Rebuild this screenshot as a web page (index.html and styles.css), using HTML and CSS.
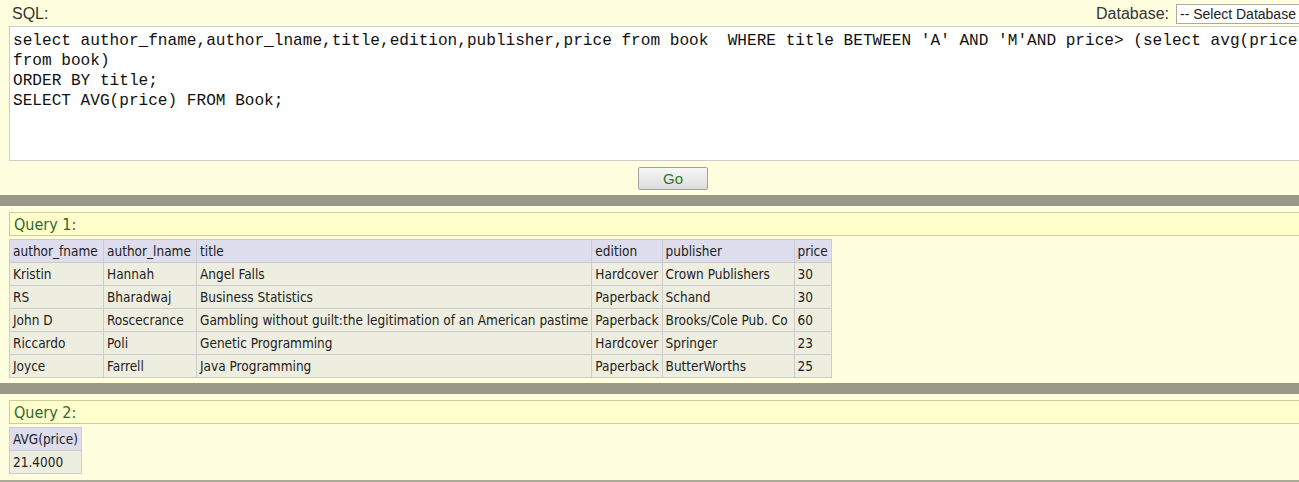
FILE: index.html
```html
<!DOCTYPE html>
<html>
<head>
<meta charset="utf-8">
<link rel="stylesheet" href="styles.css">
</head>
<body>
<div class="page">
  <div class="top">
    <span class="label">SQL:</span>
    <span class="db">
      <span class="label">Database:</span>
      <select class="db-select"><option>-- Select Database --</option></select>
    </span>
  </div>
  <textarea class="editor" spellcheck="false">select author_fname,author_lname,title,edition,publisher,price from book  WHERE title BETWEEN 'A' AND 'M'AND price&gt; (select avg(price)
from book)
ORDER BY title;
SELECT AVG(price) FROM Book;</textarea>
  <div class="go-row"><button class="go">Go</button></div>

  <div class="bar"></div>
  <div class="result">
    <div class="qhead">Query 1:</div>
    <table class="grid">
      <colgroup>
        <col class="c1"><col class="c2"><col class="c3"><col class="c4"><col class="c5"><col class="c6">
      </colgroup>
      <tr><th>author_fname</th><th>author_lname</th><th>title</th><th>edition</th><th>publisher</th><th>price</th></tr>
      <tr><td>Kristin</td><td>Hannah</td><td>Angel Falls</td><td>Hardcover</td><td>Crown Publishers</td><td>30</td></tr>
      <tr><td>RS</td><td>Bharadwaj</td><td>Business Statistics</td><td>Paperback</td><td>Schand</td><td>30</td></tr>
      <tr><td>John D</td><td>Roscecrance</td><td>Gambling without guilt:the legitimation of an American pastime</td><td>Paperback</td><td>Brooks/Cole Pub. Co</td><td>60</td></tr>
      <tr><td>Riccardo</td><td>Poli</td><td>Genetic Programming</td><td>Hardcover</td><td>Springer</td><td>23</td></tr>
      <tr><td>Joyce</td><td>Farrell</td><td>Java Programming</td><td>Paperback</td><td>ButterWorths</td><td>25</td></tr>
    </table>
  </div>

  <div class="bar"></div>
  <div class="result last">
    <div class="qhead">Query 2:</div>
    <table class="grid">
      <colgroup><col class="a1"></colgroup>
      <tr><th>AVG(price)</th></tr>
      <tr><td>21.4000</td></tr>
    </table>
  </div>
</div>
</body>
</html>
```

FILE: styles.css
```css
html, body {
  margin: 0;
  padding: 0;
}
body {
  background: #ffffe0;
  width: 1299px;
  height: 482px;
  overflow: hidden;
  font-family: "Liberation Sans", Arial, sans-serif;
  color: #222;
}
.page {
  width: 1346px;
}
.top {
  display: flex;
  justify-content: space-between;
  align-items: center;
  height: 26px;
  padding: 1px 10px 0 12px;
  box-sizing: border-box;
}
.label {
  font-size: 16px;
  color: #333;
}
.db {
  display: flex;
  align-items: center;
  gap: 7px;
}
.db-select {
  width: 160px;
  height: 20px;
  font-family: "Liberation Sans", Arial, sans-serif;
  font-size: 14px;
  color: #222;
  background: #fff;
  border: 1px solid #a9a9a9;
  border-radius: 0;
  padding: 0 3px;
  appearance: none;
  -webkit-appearance: none;
}
.editor {
  display: block;
  margin: 0 0 0 9px;
  width: 1328px;
  height: 135px;
  box-sizing: border-box;
  border: 1px solid #cccccc;
  background: #fff;
  padding: 4px 3px 2px;
  font-family: "Liberation Mono", "Courier New", monospace;
  font-size: 16.1px;
  line-height: 20px;
  color: #111;
  resize: none;
  white-space: pre;
  overflow: hidden;
}
.go-row {
  display: flex;
  justify-content: center;
  padding-top: 6px;
  height: 34px;
  box-sizing: border-box;
}
.go {
  width: 70px;
  height: 23px;
  border: 1px solid #a0a0a0;
  border-radius: 2px;
  background: linear-gradient(#f8f8f8, #dcdcdc);
  color: #2d7a2d;
  font-family: "Liberation Sans", Arial, sans-serif;
  font-size: 15px;
  padding: 0;
}
.bar {
  height: 11px;
  background: #999988;
}
.result {
  padding: 6px 0 5px 9px;
}
.result.last {
  padding-bottom: 6px;
  border-bottom: 2px solid #aaaa99;
}
.qhead {
  width: 1328px;
  height: 24px;
  box-sizing: border-box;
  border: 1px solid #cccc99;
  background: #ffffcc;
  color: #336633;
  font-family: "DejaVu Sans Condensed", "Liberation Sans", sans-serif;
  font-size: 16px;
  line-height: 23px;
  padding-left: 4px;
}
.grid {
  margin-top: 3px;
  border-collapse: collapse;
  table-layout: fixed;
  font-family: "DejaVu Sans Condensed", "Liberation Sans", sans-serif;
  font-size: 13.5px;
  color: #222;
}
.grid th, .grid td {
  border: 1px solid #cccccc;
  height: 23px;
  padding: 0 3px;
  box-sizing: border-box;
  text-align: left;
  font-weight: normal;
  white-space: nowrap;
  overflow: hidden;
}
.grid th {
  background: #ddddee;
}
.grid td {
  background: #eeeee0;
}
.c1 { width: 94px; }
.c2 { width: 93px; }
.c3 { width: 395px; }
.c4 { width: 70px; }
.c5 { width: 132px; }
.c6 { width: 36px; }
.a1 { width: 71px; }
```
